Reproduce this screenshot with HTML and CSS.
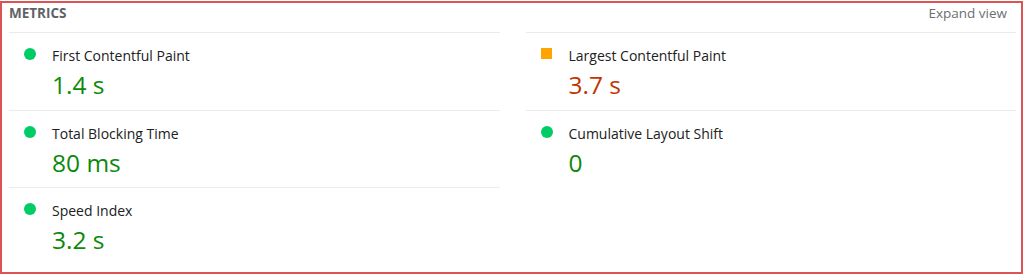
FILE: index.html
```html
<!DOCTYPE html>
<html lang="en">
<head>
    <meta charset="UTF-8">
    <title>Metrics</title>
    <link rel="stylesheet" href="styles.css">
</head>
<body>
    <div class="panel">
        <div class="panel-header">
            <span class="panel-title">METRICS</span>
            <span class="expand-link">Expand view</span>
        </div>
        <div class="metrics">
            <div class="metric">
                <span class="icon pass"></span>
                <div class="metric-text">
                    <div class="metric-label">First Contentful Paint</div>
                    <div class="metric-value pass">1.4 s</div>
                </div>
            </div>
            <div class="metric">
                <span class="icon average"></span>
                <div class="metric-text">
                    <div class="metric-label">Largest Contentful Paint</div>
                    <div class="metric-value average">3.7 s</div>
                </div>
            </div>
            <div class="metric">
                <span class="icon pass"></span>
                <div class="metric-text">
                    <div class="metric-label">Total Blocking Time</div>
                    <div class="metric-value pass">80 ms</div>
                </div>
            </div>
            <div class="metric">
                <span class="icon pass"></span>
                <div class="metric-text">
                    <div class="metric-label">Cumulative Layout Shift</div>
                    <div class="metric-value pass">0</div>
                </div>
            </div>
            <div class="metric">
                <span class="icon pass"></span>
                <div class="metric-text">
                    <div class="metric-label">Speed Index</div>
                    <div class="metric-value pass">3.2 s</div>
                </div>
            </div>
        </div>
    </div>
</body>
</html>
```

FILE: styles.css
```css
* {
    margin: 0;
    padding: 0;
    box-sizing: border-box;
}

body {
    background: white;
    font-family: 'Open Sans', 'Noto Sans', sans-serif;
}

.panel {
    margin-top: 1px;
    width: 1023px;
    height: 273px;
    border: 2px solid #dd5252;
    padding: 0 5px 0 7px;
}

.panel-header {
    display: flex;
    justify-content: space-between;
    align-items: center;
    height: 29px;
    padding-right: 9px;
    padding-bottom: 10px;
}

.panel-title {
    font-size: 13.5px;
    font-weight: 700;
    color: #5f6368;
}

.expand-link {
    font-size: 13.5px;
    color: #6b6f74;
}

.metrics {
    display: grid;
    grid-template-columns: 1fr 1fr;
    grid-auto-rows: 77.5px;
    column-gap: 26px;
}

.metric {
    display: flex;
    align-items: flex-start;
    border-top: 1px solid #ebebeb;
    padding-top: 15px;
    padding-left: 15px;
}

.icon {
    flex: none;
    width: 12px;
    height: 12px;
    margin-right: 16px;
}

.icon.pass {
    background: #0c6;
    border-radius: 50%;
}

.icon.average {
    width: 11px;
    height: 11px;
    margin-right: 17px;
    background: #ffa400;
}

.metric-label {
    font-size: 14px;
    line-height: 15px;
    color: #212121;
}

.metric-value {
    font-size: 24.5px;
    line-height: 32px;
    margin-top: 6px;
}

.metric-value.pass {
    color: #0a8a0a;
}

.metric-value.average {
    color: #c33300;
}
```
